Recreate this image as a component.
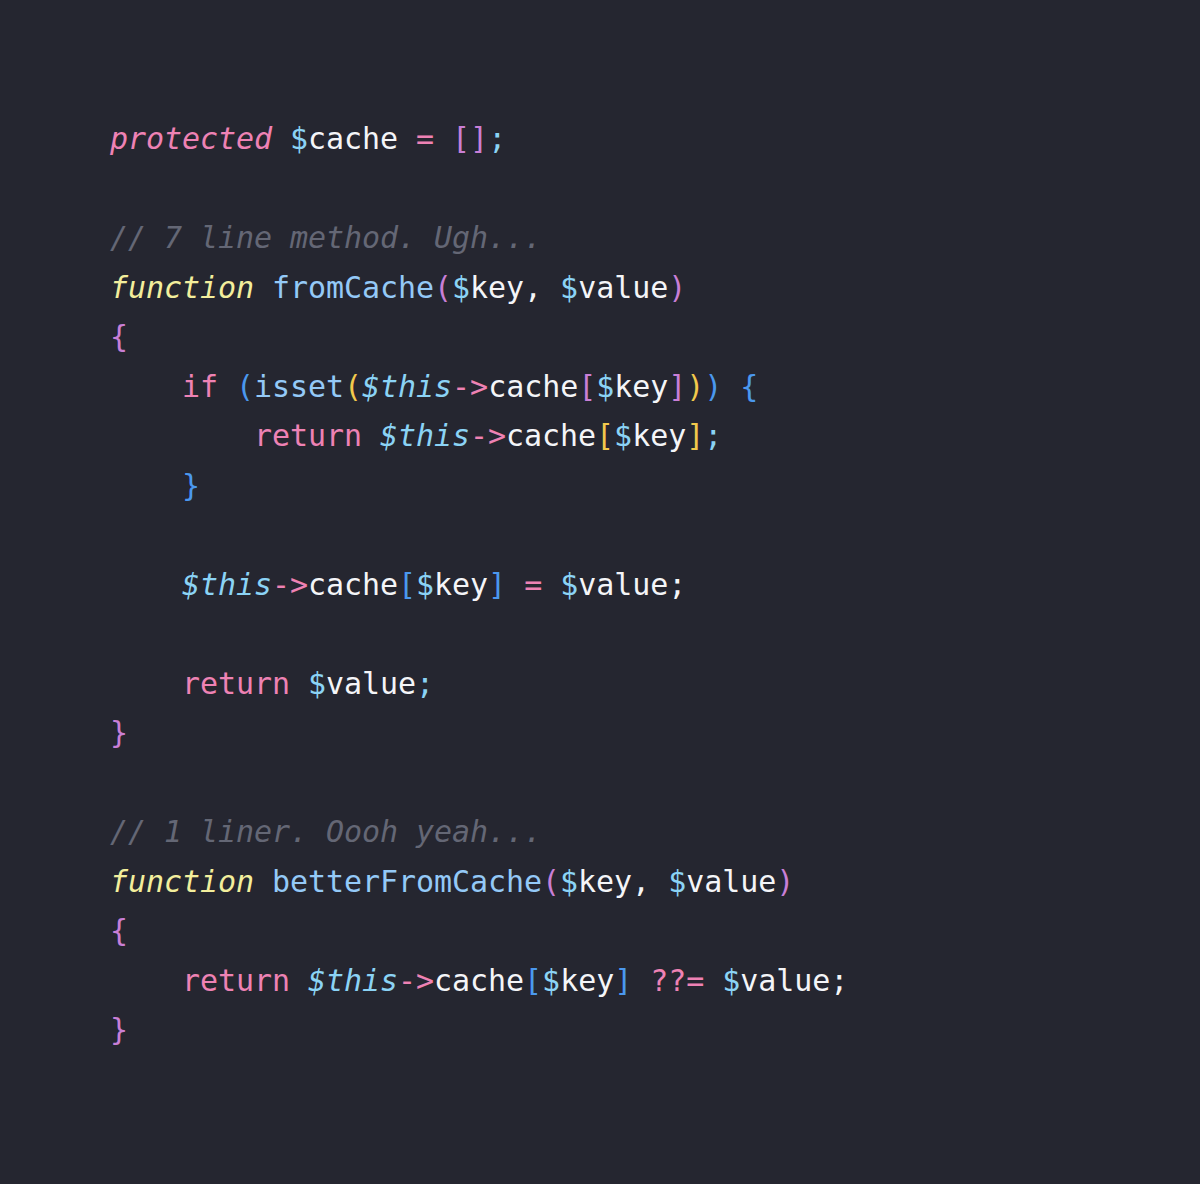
const PINK = "text-[#ee82b4]";
const CYAN = "text-[#8bd3f5]";
const WHITE = "text-[#f4f5f8]";
const PURPLE = "text-[#c97fd6]";
const YELLOW = "text-[#f3ee9c]";
const BLUE = "text-[#94c9f7]";
const BRACE = "text-[#4b98ee]";
const GOLD = "text-[#f2c94c]";
const GRAY = "text-[#646775]";

type Tok = [string, string, boolean?];

// each line: indent level + tokens [text, colour, italic]
const lines: { indent: number; toks: Tok[] }[] = [
  { indent: 0, toks: [["protected", PINK, true], [" ", WHITE], ["$", CYAN], ["cache", WHITE], [" ", WHITE], ["=", PINK], [" ", WHITE], ["[]", PURPLE], [";", CYAN]] },
  { indent: 0, toks: [] },
  { indent: 0, toks: [["// 7 line method. Ugh...", GRAY, true]] },
  { indent: 0, toks: [["function", YELLOW, true], [" ", WHITE], ["fromCache", BLUE], ["(", PURPLE], ["$", CYAN], ["key", WHITE], [", ", WHITE], ["$", CYAN], ["value", WHITE], [")", PURPLE]] },
  { indent: 0, toks: [["{", PURPLE]] },
  { indent: 1, toks: [["if", PINK], [" ", WHITE], ["(", BRACE], ["isset", BLUE], ["(", GOLD], ["$this", CYAN, true], ["->", PINK], ["cache", WHITE], ["[", PURPLE], ["$", CYAN], ["key", WHITE], ["]", PURPLE], [")", GOLD], [")", BRACE], [" ", WHITE], ["{", BRACE]] },
  { indent: 2, toks: [["return", PINK], [" ", WHITE], ["$this", CYAN, true], ["->", PINK], ["cache", WHITE], ["[", GOLD], ["$", CYAN], ["key", WHITE], ["]", GOLD], [";", CYAN]] },
  { indent: 1, toks: [["}", BRACE]] },
  { indent: 0, toks: [] },
  { indent: 1, toks: [["$this", CYAN, true], ["->", PINK], ["cache", WHITE], ["[", BRACE], ["$", CYAN], ["key", WHITE], ["]", BRACE], [" ", WHITE], ["=", PINK], [" ", WHITE], ["$", CYAN], ["value", WHITE], [";", WHITE]] },
  { indent: 0, toks: [] },
  { indent: 1, toks: [["return", PINK], [" ", WHITE], ["$", CYAN], ["value", WHITE], [";", CYAN]] },
  { indent: 0, toks: [["}", PURPLE]] },
  { indent: 0, toks: [] },
  { indent: 0, toks: [["// 1 liner. Oooh yeah...", GRAY, true]] },
  { indent: 0, toks: [["function", YELLOW, true], [" ", WHITE], ["betterFromCache", BLUE], ["(", PURPLE], ["$", CYAN], ["key", WHITE], [", ", WHITE], ["$", CYAN], ["value", WHITE], [")", PURPLE]] },
  { indent: 0, toks: [["{", PURPLE]] },
  { indent: 1, toks: [["return", PINK], [" ", WHITE], ["$this", CYAN, true], ["->", PINK], ["cache", WHITE], ["[", BRACE], ["$", CYAN], ["key", WHITE], ["]", BRACE], [" ", WHITE], ["??=", PINK], [" ", WHITE], ["$", CYAN], ["value", WHITE], [";", WHITE]] },
  { indent: 0, toks: [["}", PURPLE]] },
];

export default function App() {
  return (
    <div className="w-[1200px] h-[1184px] bg-[#252630] overflow-hidden">
      <pre className="pt-[114px] pl-[110px] font-['DejaVu_Sans_Mono',monospace] text-[30px] leading-[49.5px] tracking-[-0.06px]">
        {lines.map((line, i) => (
          <div key={i} className="h-[49.5px]">
            {"    ".repeat(line.indent)}
            {line.toks.map(([text, color, italic], j) => (
              <span key={j} className={`${color} ${italic ? "italic" : ""}`}>
                {text}
              </span>
            ))}
          </div>
        ))}
      </pre>
    </div>
  );
}
